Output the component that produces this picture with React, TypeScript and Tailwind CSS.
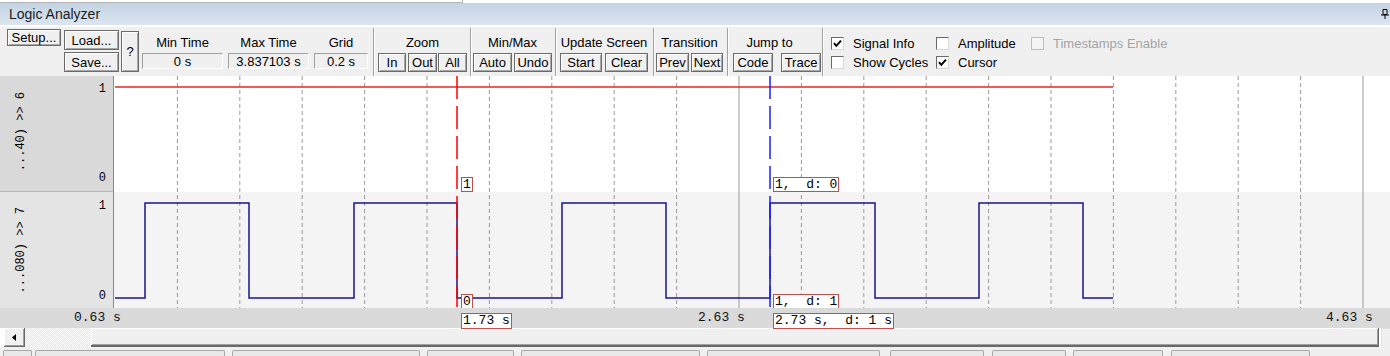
import React from "react";

// grid every 0.2 s, 1 s = 312px, plot starts at x=114
const gridXs = Array.from({ length: 20 }, (_, i) => 1 + 62.4 * (i + 1));

const wave = [
  [1, 222], [31, 222], [31, 127], [135, 127], [135, 222], [240, 222], [240, 127],
  [343, 127], [343, 222], [448, 222], [448, 127], [552, 127], [552, 222], [656, 222],
  [656, 127], [761, 127], [761, 222], [865, 222], [865, 127], [969, 127], [969, 222], [999, 222],
];

const tabs = [
  [3, 32], [35, 225], [232, 420], [427, 514], [521, 700], [707, 880],
  [890, 984], [992, 1066], [1073, 1163], [1171, 1310],
];

interface BoxProps {
  children: React.ReactNode;
  className?: string;
}

function Btn({ children, className = "" }: BoxProps) {
  return (
    <button
      type="button"
      className={"flex items-center justify-center border border-[#6b6b6b] bg-[#f0f0f0] text-[13px] leading-none text-black shadow-[inset_1px_1px_0_#ffffff,inset_-1px_-1px_0_#a8a8a8] " + className}
    >
      {children}
    </button>
  );
}

function Field({ children, className = "" }: BoxProps) {
  return (
    <div
      className={"flex h-[16px] items-center justify-center border border-t-[#a0a0a0] border-l-[#a0a0a0] border-b-white border-r-white bg-[#f0f0f0] text-[13px] leading-none " + className}
    >
      {children}
    </div>
  );
}

function Sep() {
  return <div className="mt-[1px] w-[2px] shrink-0 border-l border-r border-l-[#a0a0a0] border-r-white" />;
}

interface GroupProps {
  label: string;
  children: React.ReactNode;
  className?: string;
  labelClass?: string;
}

function Group({ label, children, className = "", labelClass = "" }: GroupProps) {
  return (
    <div className={"flex shrink-0 flex-col " + className}>
      <div className={"pt-[8px] text-center leading-[16px] " + labelClass}>{label}</div>
      <div className="mt-[2px] flex">{children}</div>
    </div>
  );
}

interface CheckProps {
  label: string;
  checked?: boolean;
  disabled?: boolean;
  className?: string;
}

function Check({ label, checked, disabled, className = "" }: CheckProps) {
  return (
    <div className={"flex h-[13px] items-center gap-[9px] leading-[13px] " + className}>
      <div
        className={
          disabled
            ? "h-[13px] w-[13px] shrink-0 border border-[#bdbdbd] bg-[#f4f4f4]"
            : "flex h-[13px] w-[13px] shrink-0 items-center justify-center border border-t-[#696969] border-l-[#696969] border-b-[#d8d8d8] border-r-[#d8d8d8] bg-white"
        }
      >
        {checked && (
          <svg width="11" height="11" viewBox="0 0 11 11">
            <path d="M2 5.2 L4.3 7.8 L9 2.6" stroke="#000" strokeWidth="2" fill="none" />
          </svg>
        )}
      </div>
      <span className={"whitespace-nowrap " + (disabled ? "text-[#a3a3a3]" : "text-black")}>{label}</span>
    </div>
  );
}

function Tag({ children, className = "" }: BoxProps) {
  return (
    <div
      className={"absolute border border-[#c0504d] bg-white px-[1px] font-['Liberation_Mono',monospace] text-[13px] leading-[13px] text-black whitespace-pre " + className}
    >
      {children}
    </div>
  );
}

function Plot() {
  return (
    <svg width="1276" height="232" viewBox="0 0 1276 232" className="block">
      <rect x="0" y="0" width="1276" height="116" fill="#ffffff" />
      <rect x="0" y="116" width="1276" height="116" fill="#f4f4f4" />
      {gridXs.map((x, i) => (
        <line
          key={i}
          x1={x}
          x2={x}
          y1="0"
          y2="232"
          stroke="#9a9a9a"
          strokeWidth="1"
          strokeDasharray={i === 9 || i === 19 ? undefined : "4 3"}
        />
      ))}
      <line x1="1" x2="999" y1="11" y2="11" stroke="#e02828" strokeWidth="1.5" />
      <polyline points={wave.map((p) => p.join(",")).join(" ")} fill="none" stroke="#16168f" strokeWidth="1.5" />
      <line x1="343" x2="343" y1="0" y2="231" stroke="#ff0000" strokeWidth="1.5" strokeDasharray="23 7" />
      <line x1="656" x2="656" y1="0" y2="231" stroke="#1e1eff" strokeWidth="1.5" strokeDasharray="23 7" />
    </svg>
  );
}

export default function App() {
  return (
    <div className="h-[356px] w-[1390px] overflow-hidden bg-[#f0f0f0] font-['Liberation_Sans',Arial,sans-serif] text-[13px] text-black">
      {/* top strip */}
      <div className="h-[3px] bg-white">
        <div className="h-[3px] w-[463px] border-r border-b border-[#b4b4b4]" />
      </div>

      {/* title */}
      <div className="flex h-[24px] items-center justify-between border-b-2 border-white bg-linear-to-b from-[#c3d3e3] to-[#dbe6f1] pl-[9px] pr-[1px]">
        <span className="text-[14px] text-[#1b1b1b]">Logic Analyzer</span>
        <svg width="8" height="10" viewBox="0 0 8 10">
          <path d="M2 0.5 H6 V5.5 H2 Z" stroke="#000" strokeWidth="1" fill="none" />
          <path d="M0 6 H8 M4 6 V10" stroke="#000" strokeWidth="1" />
        </svg>
      </div>

      {/* toolbar */}
      <div className="flex h-[49px] pl-[7px]">
        <Btn className="mt-[2px] h-[17px] w-[54px] shrink-0">Setup...</Btn>
        <div className="ml-[3px] flex w-[55px] shrink-0 flex-col">
          <Btn className="mt-[3px] h-[20px] w-[55px]">Load...</Btn>
          <Btn className="mt-[2px] h-[20px] w-[55px]">Save...</Btn>
        </div>
        <Btn className="ml-[2px] mt-[4px] h-[41px] w-[18px] shrink-0">?</Btn>

        <Group label="Min Time" className="ml-[3px] w-[81px]">
          <Field className="w-[81px]">0 s</Field>
        </Group>
        <Group label="Max Time" className="ml-[5px] w-[81px]">
          <Field className="w-[81px]">3.837103 s</Field>
        </Group>
        <Group label="Grid" className="ml-[5px] w-[54px]">
          <Field className="w-[54px]">0.2 s</Field>
        </Group>
        <div className="ml-[5px]" />
        <Sep />

        <Group label="Zoom" className="w-[95px] px-[3px]">
          <Btn className="h-[19px] w-[28px]">In</Btn>
          <Btn className="ml-[2px] h-[19px] w-[29px]">Out</Btn>
          <Btn className="ml-[1px] h-[19px] w-[29px]">All</Btn>
        </Group>
        <Sep />
        <Group label="Min/Max" className="w-[83px] pl-[1px] pr-[3px]">
          <Btn className="h-[19px] w-[39px]">Auto</Btn>
          <Btn className="ml-[2px] h-[19px] w-[38px]">Undo</Btn>
        </Group>
        <Sep />
        <Group label="Update Screen" className="w-[96px] pl-[3px] pr-[5px]" labelClass="whitespace-nowrap">
          <Btn className="h-[19px] w-[42px]">Start</Btn>
          <Btn className="ml-[3px] h-[19px] w-[43px]">Clear</Btn>
        </Group>
        <Sep />
        <Group label="Transition" className="w-[72px] pl-[1px] pr-[4px]">
          <Btn className="h-[19px] w-[33px]">Prev</Btn>
          <Btn className="ml-[2px] h-[19px] w-[32px]">Next</Btn>
        </Group>
        <Sep />
        <Group label="Jump to" className="w-[93px] pl-[4px] pr-[1px]" labelClass="pr-[15px]">
          <Btn className="h-[19px] w-[40px]">Code</Btn>
          <Btn className="ml-[8px] h-[19px] w-[40px]">Trace</Btn>
        </Group>
        <Sep />

        <div className="grid h-fit grid-cols-[105px_95px_160px] gap-y-[6px] pl-[7px] pt-[10px]">
          <Check label="Signal Info" checked />
          <Check label="Amplitude" />
          <Check label="Timestamps Enable" disabled />
          <Check label="Show Cycles" />
          <Check label="Cursor" checked />
        </div>
      </div>

      {/* waveform */}
      <div className="flex h-[232px]">
        <div className="flex w-[114px] shrink-0 flex-col border-r border-[#8a8a8a] font-['Liberation_Mono',monospace] text-[12px]">
          <div className="flex h-[116px] border-b border-[#b8b8b8] bg-[#d9d9d9]">
            <div className="pl-[15px] pt-[16px]">
              <div className="rotate-180 whitespace-pre leading-[12px] [writing-mode:vertical-rl]">...40) &gt;&gt; 6</div>
            </div>
            <div className="ml-auto flex flex-col justify-between pb-[6px] pr-[7px] pt-[6px] leading-[14px]">
              <span>1</span>
              <span>0</span>
            </div>
          </div>
          <div className="flex h-[116px] bg-[#e4e4e4]">
            <div className="pl-[15px] pt-[15px]">
              <div className="rotate-180 whitespace-pre leading-[12px] [writing-mode:vertical-rl]">...080) &gt;&gt; 7</div>
            </div>
            <div className="ml-auto flex flex-col justify-between pb-[5px] pr-[7px] pt-[7px] leading-[14px]">
              <span>1</span>
              <span>0</span>
            </div>
          </div>
        </div>
        <div className="relative">
          <Plot />
          <Tag className="left-[347px] top-[101px]">1</Tag>
          <Tag className="left-[347px] top-[218px]">0</Tag>
          <Tag className="left-[659px] top-[101px]">1,  d: 0</Tag>
          <Tag className="left-[659px] top-[218px]">1,  d: 1</Tag>
        </div>
      </div>

      {/* time axis */}
      <div className="relative h-[20px] bg-[#dadada] font-['Liberation_Mono',monospace] text-[13px] leading-[15px] text-[#111]">
        <span className="absolute left-[74px] top-[2px]">0.63 s</span>
        <span className="absolute left-[698px] top-[2px]">2.63 s</span>
        <span className="absolute left-[1326px] top-[2px]">4.63 s</span>
        <Tag className="left-[461px] top-[5px] leading-[14px]">1.73 s</Tag>
        <Tag className="left-[773px] top-[5px] leading-[14px]">2.73 s,  d: 1 s</Tag>
      </div>

      {/* scrollbar */}
      <div className="flex h-[19px] bg-white pl-[4px]">
        <div className="flex h-[19px] w-[21px] shrink-0 items-center justify-center border-b border-r border-[#696969] bg-[#f0f0f0] shadow-[inset_1px_1px_0_#ffffff,inset_-1px_-1px_0_#a0a0a0]">
          <svg width="4" height="7" viewBox="0 0 4 7">
            <path d="M4 0 L0 3.5 L4 7 Z" fill="#000" />
          </svg>
        </div>
        <div className="h-[19px] w-[66px] shrink-0 bg-[repeating-conic-gradient(#ffffff_0_25%,#e4e4e4_0_50%)] bg-[length:2px_2px]" />
        <div className="h-[19px] w-[1288px] shrink-0 border-b-2 border-r border-[#696969] bg-[#f0f0f0] shadow-[inset_1px_1px_0_#ffffff,inset_-1px_-1px_0_#a0a0a0]" />
        <div className="ml-[2px] h-[19px] w-[10px] border-l border-t border-[#e0e0e0] bg-[#f0f0f0]" />
      </div>

      {/* bottom tabs */}
      <div className="flex h-[9px] items-end bg-[#f0f0f0]">
        {tabs.map(([a, b], i) => (
          <div
            key={i}
            className="h-[6px] shrink-0 rounded-t-[2px] border border-b-0 border-[#a8a8a8] bg-[#e8e8e8]"
            style={{ marginLeft: a - (i === 0 ? 0 : tabs[i - 1][1]), width: b - a }}
          />
        ))}
      </div>
    </div>
  );
}
